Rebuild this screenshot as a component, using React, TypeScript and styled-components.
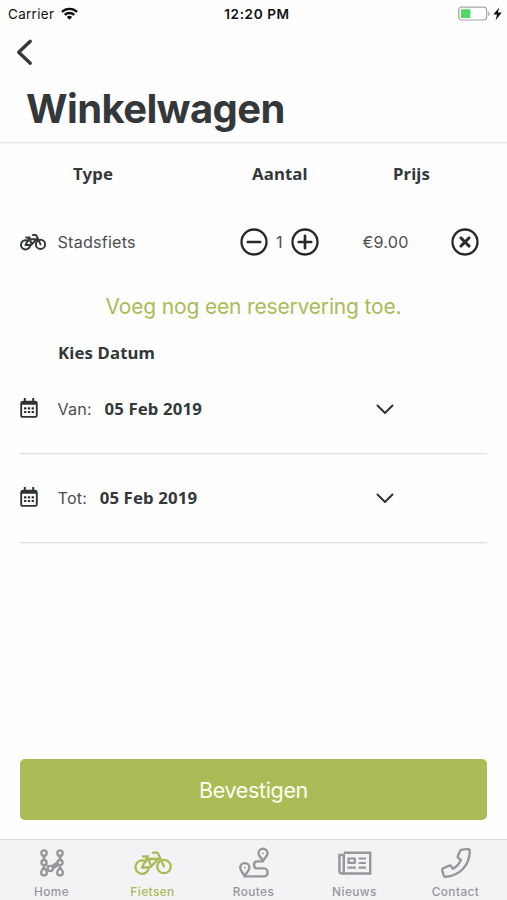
import React from 'react';
import styled, { createGlobalStyle } from 'styled-components';

const ink = '#34383a';
const green = '#a9bc55';
const grey = '#96979a';

const GlobalStyle = createGlobalStyle`
  * { box-sizing: border-box; }
  body { margin: 0; background: #fff; }
  button { border: 0; padding: 0; background: none; font: inherit; color: inherit; }
  svg { display: block; overflow: visible; }
`;

const Screen = styled.div`
  width: 507px;
  height: 900px;
  display: flex;
  flex-direction: column;
  overflow: hidden;
  background: #fefefe;
  color: ${ink};
  font-family: Inter, 'Liberation Sans', sans-serif;
`;

const StatusBar = styled.div`
  display: grid;
  grid-template-columns: 1fr auto 1fr;
  align-items: center;
  height: 28px;
  padding: 0 5px 0 8px;
  color: #111;
`;

const Carrier = styled.div`
  display: flex;
  align-items: center;
  gap: 7px;
  font-size: 13.4px;
  line-height: 16px;
  letter-spacing: 0.35px;
`;

const Clock = styled.div`
  padding-left: 4px;
  font-size: 13.6px;
  font-weight: 600;
  line-height: 16px;
  letter-spacing: 0.6px;
`;

const Battery = styled.div`
  display: flex;
  justify-content: flex-end;
`;

const NavBar = styled.nav`
  display: flex;
  align-items: center;
  height: 48px;
  padding-left: 16px;
`;

const TitleBar = styled.header`
  height: 67px;
  padding: 9px 0 0 26px;
  border-bottom: 1px solid #e6e6e6;
  box-shadow: 0 1px #f6f6f6;
`;

const Title = styled.h1`
  margin: 0;
  font-size: 40px;
  line-height: 48px;
  font-weight: 700;
  letter-spacing: -0.6px;
`;

const Row = styled.div<{ $height: number }>`
  display: grid;
  grid-template-columns: 57.5px 182px 123px 88px 28px;
  align-items: center;
  height: ${(p) => p.$height}px;
`;

const Heading = styled.span<{ $indent?: number }>`
  padding-left: ${(p) => p.$indent ?? 0}px;
  font-family: 'Noto Sans', 'Open Sans', sans-serif;
  font-size: 16.8px;
  font-weight: 700;
  line-height: 24px;
  letter-spacing: 0.12px;
  white-space: nowrap;
`;

const Label = styled.span`
  font-size: 16.2px;
  line-height: 24px;
  letter-spacing: 0.2px;
  color: #4b4e50;
  white-space: nowrap;
`;

const IconCell = styled.span`
  padding-left: 20px;
`;

const Stepper = styled.div`
  display: flex;
  align-items: center;
  justify-content: space-between;
  width: 80px;
`;

const AddLink = styled.button`
  display: flex;
  align-items: center;
  justify-content: center;
  height: 52px;
  margin-bottom: 9px;
  font-size: 21px;
  letter-spacing: -0.17px;
  color: ${green};
`;

const SectionHeading = styled.h2`
  margin: 0;
  height: 24px;
  padding-left: 58px;
  font: 700 16.8px/24px 'Noto Sans', 'Open Sans', sans-serif;
  letter-spacing: 0.12px;
`;

const DateRow = styled.div`
  display: grid;
  grid-template-columns: 37.5px 318px 1fr;
  align-items: center;
  height: 89px;
  margin: 0 20px;
  border-bottom: 1px solid #e0e0e0;
  box-shadow: 0 1px #f4f4f4;
`;

const DateValue = styled.div`
  display: flex;
  align-items: center;
  gap: 12.5px;
`;

const Footer = styled.div`
  margin: auto 20px 19px;
`;

const Confirm = styled.button`
  width: 467px;
  height: 61px;
  border-radius: 5px;
  background: ${green};
  color: #fdfff3;
  font-size: 21.5px;
  letter-spacing: -0.35px;
`;

const TabBar = styled.nav`
  display: grid;
  grid-template-columns: repeat(5, 101px);
  justify-content: center;
  height: 61px;
  border-top: 1px solid #dcdddf;
  background: #f3f3f5;
`;

const Tab = styled.button<{ $active?: boolean }>`
  display: flex;
  flex-direction: column;
  align-items: center;
  gap: 5px;
  padding-top: 8px;
  color: ${(p) => (p.$active ? green : grey)};
  font-size: 11.8px;
  font-weight: 500;
  line-height: 18px;
  letter-spacing: 0.45px;
`;

const Wifi = () => (
  <svg width="17" height="12" viewBox="0 0 17 12" fill="none" stroke="#111" strokeWidth="2.4">
    <path d="M.9 3.9a11 11 0 0 1 15.2 0M3.7 6.9a7 7 0 0 1 9.6 0" />
    <path d="M8.5 11.7 5.8 9a4 4 0 0 1 5.4 0z" fill="#111" stroke="none" />
  </svg>
);

const BatteryIcon = () => (
  <svg width="44" height="14" viewBox="0 0 44 14">
    <rect x=".7" y=".2" width="28" height="12.8" rx="3" fill="#fff" stroke="#a4a6a6" strokeWidth="1.2" />
    <rect x="2.9" y="2.2" width="9.5" height="8.8" rx="1" fill="#4cd964" />
    <path d="M30.2 4.4c1.8.6 1.8 4 0 4.6z" fill="#a4a6a6" />
    <path d="M41.2.6 35.3 7.6h3.7l-1.4 5.6L43.8 5.6h-3.9z" fill="#111" />
  </svg>
);

const Back = () => (
  <svg width="16" height="26" viewBox="0 0 16 26" fill="none" stroke={ink} strokeWidth="3.4" strokeLinecap="round" strokeLinejoin="round">
    <path d="M14.3 2.3 2.7 13.3l11.6 10.9" />
  </svg>
);

const Bike = ({ width, height, weight = 2.3 }: { width: number; height: number; weight?: number }) => (
  <svg width={width} height={height} viewBox="0 0 38 23" fill="none" stroke="currentColor" strokeWidth={weight} strokeLinecap="round" strokeLinejoin="round">
    <path d="M12 10.2A6.7 6.7 0 1 0 14.8 16H8l5-9.5" />
    <circle cx="30" cy="15" r="6.7" />
    <path d="M9 5h5M13 7.5h11.5L16 16h-2M14 7.5l3 6.5M19 1.2h3.5c1.4 0 1.8 1.2 2.3 2.6L30 15" />
  </svg>
);

const CircleIcon = ({ kind }: { kind: 'minus' | 'plus' | 'close' }) => (
  <svg width="28" height="28" viewBox="0 0 28 28" fill="none" stroke="#26292b" strokeWidth="2.3" strokeLinecap="round">
    <circle cx="14" cy="14" r="12.5" />
    {kind === 'close' ? (
      <path d="m10 10 8 8m0-8-8 8" strokeWidth="3.1" />
    ) : (
      <path d={kind === 'plus' ? 'M7.8 14h12.4M14 7.8v12.4' : 'M7.8 14h12.4'} strokeWidth="2.7" />
    )}
  </svg>
);

const Calendar = () => (
  <svg width="18" height="22" viewBox="0 0 18 22">
    <rect x="1.2" y="4" width="15.6" height="14.9" rx="1.5" fill="none" stroke="#303336" strokeWidth="1.9" />
    <path d="M1 6.8V4.5Q1 2.8 3 2.8h12q2 0 2 1.7v2.3zM3.8 0h2v4h-2zM12.2 0h2v4h-2z" fill="#303336" />
    {[4, 7.8, 11.6].map((x) =>
      [9.2, 12.9].map((y) => <rect key={`${x}-${y}`} x={x} y={y} width="2.4" height="2.2" rx=".4" fill="#303336" />),
    )}
  </svg>
);

const Chevron = () => (
  <svg width="18" height="12" viewBox="0 0 18 12" fill="none" stroke="#303336" strokeWidth="2" strokeLinecap="round" strokeLinejoin="round">
    <path d="m1.5 2.5 7.5 7.5 7.5-7.5" />
  </svg>
);

const HomeIcon = () => (
  <svg width="24" height="30" viewBox="0 0 24 30" fill="none" stroke="currentColor" strokeWidth="2.3">
    {[4, 20].map((x) => (
      <g key={x}>
        <circle cx={x} cy="5" r="2.7" />
        <circle cx={x} cy="14.6" r="2.6" />
        <path d={`M${x} 19.3c-1.2 2.2-2.9 3.4-2.9 5.3a2.9 2.9 0 0 0 5.8 0c0-1.9-1.7-3.1-2.9-5.3z`} />
        <path d={`M${x - 1.6} 7.4 ${x} 11l1.6-3.6M${x} 16v4`} strokeWidth="1.7" />
      </g>
    ))}
    <path d="m11.2 20.3 7.3-5" strokeWidth="4.8" />
    <circle cx="10.3" cy="20.5" r="2.6" fill="#f3f3f5" />
    <path d="m6 16.7 1.7 1.6" strokeWidth="1.7" />
  </svg>
);

const RouteIcon = () => (
  <svg width="30" height="30" viewBox="0 0 30 30" fill="none" stroke="currentColor" strokeWidth="2.4" strokeLinejoin="round">
    <path d="M5.6 28.2C3.8 24.4 1.2 22.6 1.2 19.7a4.6 4.6 0 0 1 9.2 0c0 2.9-3 4.7-4.8 8.5zM24 13.2c-1.8-3.6-4.5-5.3-4.5-8a4.5 4.5 0 0 1 9 0c0 2.7-2.7 4.4-4.5 8z" />
    <path d="M24 13.4h-5.5c-4.6 0-4.6 7 0 7H25c4.8 0 4.8 8 0 8H5.6" />
    <circle cx="5.8" cy="19.7" r=".9" fill="currentColor" stroke="none" />
    <circle cx="24" cy="5.3" r=".9" fill="currentColor" stroke="none" />
  </svg>
);

const NewsIcon = () => (
  <svg width="34" height="30" viewBox="0 0 34 30" fill="none" stroke="currentColor" strokeWidth="2.4">
    <path d="M5.8 4.8h26.4v20.7H4.2q-2.8 0-2.8-2.8V7h4.4v15.8q0 2.4-1.7 2.4" />
    <path d="M10.6 10.5h6.2v4.3h-6.2zM20.6 10.5h7.4M20.6 15h7.4M9.4 19.6h8.5M20.6 19.6h7.4" strokeWidth="2.2" />
  </svg>
);

const PhoneIcon = () => (
  <svg width="30" height="30" viewBox="0 0 30 30" fill="none" stroke="currentColor" strokeWidth="2.4" strokeLinejoin="round">
    <path d="M20.4 1.8q3.7-.9 7.2-.6 1.2.2 1.2 1.4c0 14.4-9.6 25.2-24.6 26.2q-1.1.1-1.4-1L1.2 22q-.2-1.1.8-1.6l6.3-2.7q1-.4 1.7.4l1.9 2.6c4-2 6.7-5.2 8-9l-2.6-1.8q-.9-.7-.5-1.8l2.5-5.5q.3-.7 1.1-.8z" />
  </svg>
);

const dates = [
  { label: 'Van:', value: '05 Feb 2019' },
  { label: 'Tot:', value: '05 Feb 2019' },
];

const tabs = [
  { name: 'Home', icon: <HomeIcon /> },
  { name: 'Fietsen', icon: <Bike width={38} height={30} />, active: true },
  { name: 'Routes', icon: <RouteIcon /> },
  { name: 'Nieuws', icon: <NewsIcon /> },
  { name: 'Contact', icon: <PhoneIcon /> },
];

export default function App() {
  return (
    <Screen>
      <GlobalStyle />
      <StatusBar>
        <Carrier>Carrier <Wifi /></Carrier>
        <Clock>12:20 PM</Clock>
        <Battery><BatteryIcon /></Battery>
      </StatusBar>
      <NavBar><button aria-label="Terug"><Back /></button></NavBar>
      <TitleBar><Title>Winkelwagen</Title></TitleBar>
      <Row $height={61}>
        <span />
        <Heading $indent={15.5}>Type</Heading>
        <Heading $indent={12.5}>Aantal</Heading>
        <Heading $indent={30.5}>Prijs</Heading>
      </Row>
      <Row $height={76}>
        <IconCell><Bike width={26} height={16} weight={2.9} /></IconCell>
        <Label>Stadsfiets</Label>
        <Stepper>
          <button aria-label="Minder"><CircleIcon kind="minus" /></button>
          <Label>1</Label>
          <button aria-label="Meer"><CircleIcon kind="plus" /></button>
        </Stepper>
        <Label>€9.00</Label>
        <button aria-label="Verwijder"><CircleIcon kind="close" /></button>
      </Row>
      <AddLink>Voeg nog een reservering toe.</AddLink>
      <SectionHeading>Kies Datum</SectionHeading>
      {dates.map((d) => (
        <DateRow key={d.label}>
          <Calendar />
          <DateValue><Label>{d.label}</Label><Heading>{d.value}</Heading></DateValue>
          <Chevron />
        </DateRow>
      ))}
      <Footer><Confirm>Bevestigen</Confirm></Footer>
      <TabBar>
        {tabs.map((t) => (
          <Tab key={t.name} $active={t.active}>{t.icon}{t.name}</Tab>
        ))}
      </TabBar>
    </Screen>
  );
}
